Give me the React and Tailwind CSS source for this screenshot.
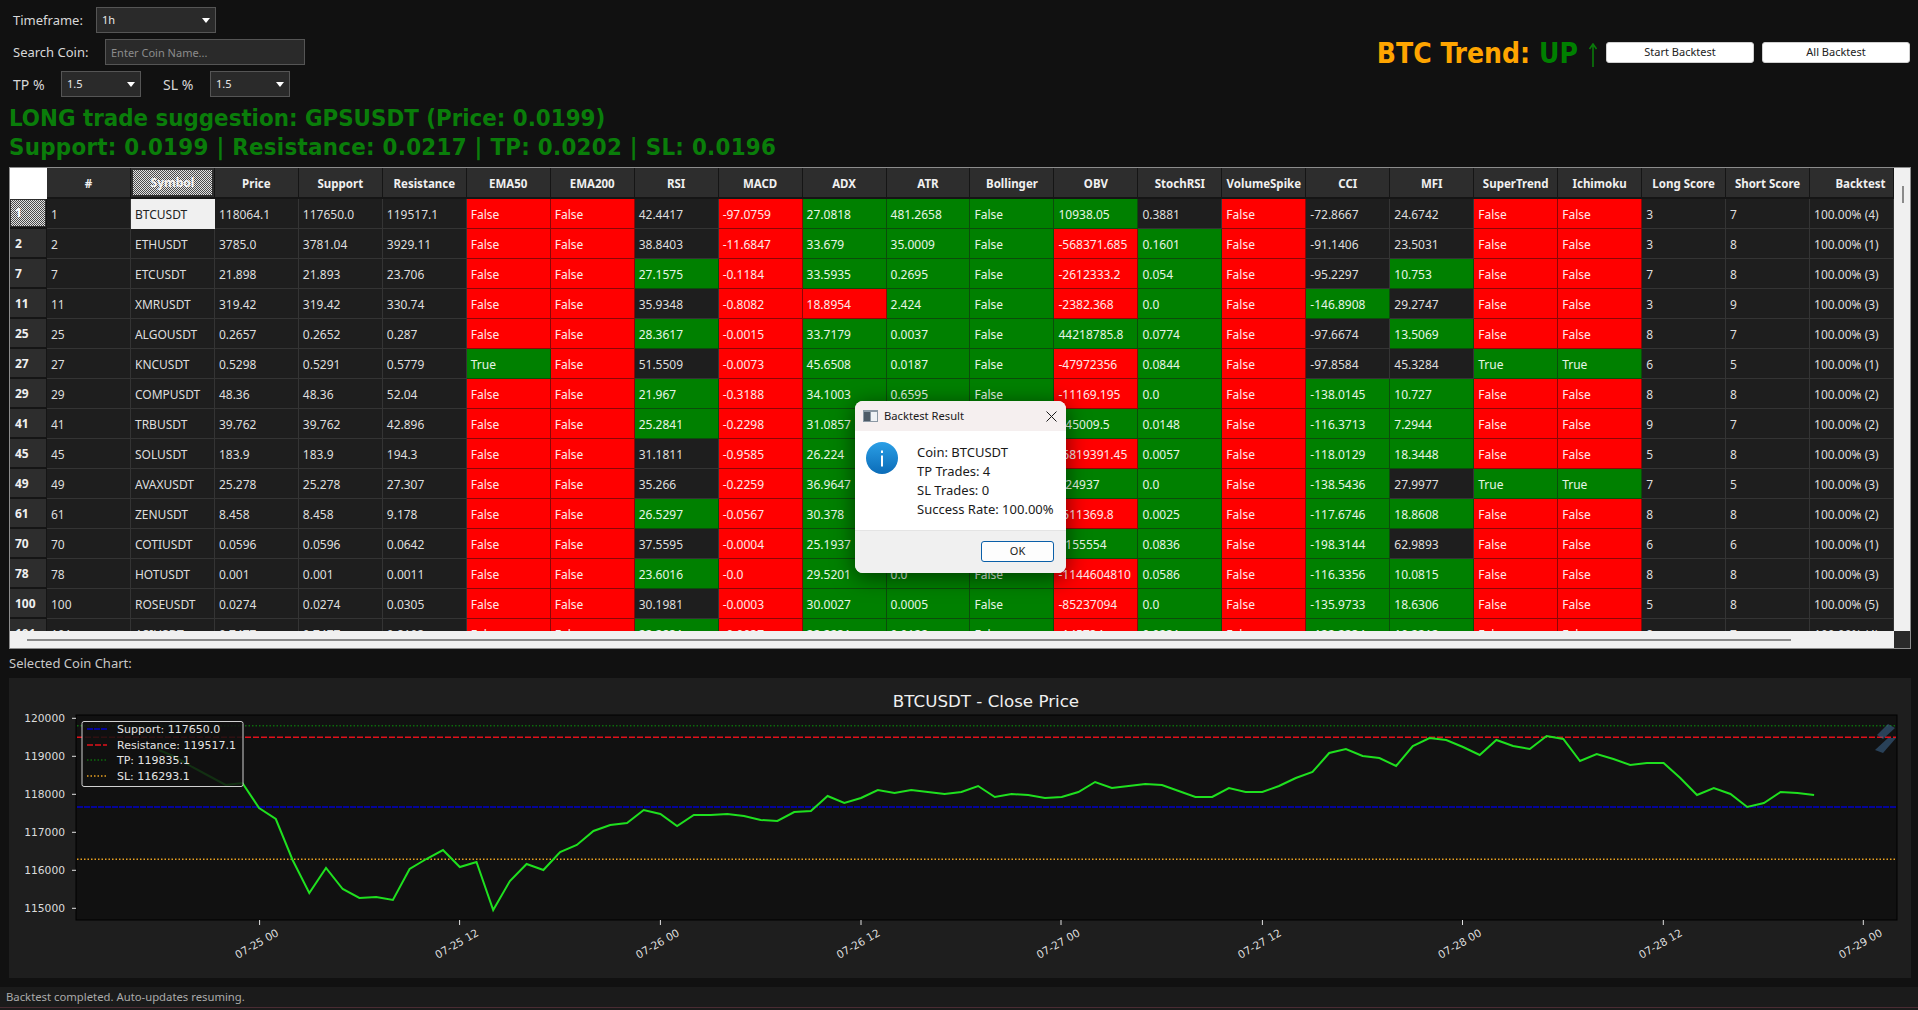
const columns = ["#", "Symbol", "Price", "Support", "Resistance", "EMA50", "EMA200", "RSI", "MACD", "ADX", "ATR", "Bollinger", "OBV", "StochRSI", "VolumeSpike", "CCI", "MFI", "SuperTrend", "Ichimoku", "Long Score", "Short Score", "Backtest"]

// values from # to Backtest, mask = colour of each cell from EMA50 on
const rows = [
  { id: "1", mask: "rrnrggggnrnnrrnnn", values: ["1", "BTCUSDT", "118064.1", "117650.0", "119517.1", "False", "False", "42.4417", "-97.0759", "27.0818", "481.2658", "False", "10938.05", "0.3881", "False", "-72.8667", "24.6742", "False", "False", "3", "7", "100.00% (4)"] },
  { id: "2", mask: "rrnrgggrgrnnrrnnn", values: ["2", "ETHUSDT", "3785.0", "3781.04", "3929.11", "False", "False", "38.8403", "-11.6847", "33.679", "35.0009", "False", "-568371.685", "0.1601", "False", "-91.1406", "23.5031", "False", "False", "3", "8", "100.00% (1)"] },
  { id: "7", mask: "rrgrgggrgrngrrnnn", values: ["7", "ETCUSDT", "21.898", "21.893", "23.706", "False", "False", "27.1575", "-0.1184", "33.5935", "0.2695", "False", "-2612333.2", "0.054", "False", "-95.2297", "10.753", "False", "False", "7", "8", "100.00% (3)"] },
  { id: "11", mask: "rrnrrggrgrgnrrnnn", values: ["11", "XMRUSDT", "319.42", "319.42", "330.74", "False", "False", "35.9348", "-0.8082", "18.8954", "2.424", "False", "-2382.368", "0.0", "False", "-146.8908", "29.2747", "False", "False", "3", "9", "100.00% (3)"] },
  { id: "25", mask: "rrgrgggggrngrrnnn", values: ["25", "ALGOUSDT", "0.2657", "0.2652", "0.287", "False", "False", "28.3617", "-0.0015", "33.7179", "0.0037", "False", "44218785.8", "0.0774", "False", "-97.6674", "13.5069", "False", "False", "8", "7", "100.00% (3)"] },
  { id: "27", mask: "grnrgggrgrnnggnnn", values: ["27", "KNCUSDT", "0.5298", "0.5291", "0.5779", "True", "False", "51.5509", "-0.0073", "45.6508", "0.0187", "False", "-47972356", "0.0844", "False", "-97.8584", "45.3284", "True", "True", "6", "5", "100.00% (1)"] },
  { id: "29", mask: "rrgrgggrgrggrrnnn", values: ["29", "COMPUSDT", "48.36", "48.36", "52.04", "False", "False", "21.967", "-0.3188", "34.1003", "0.6595", "False", "-11169.195", "0.0", "False", "-138.0145", "10.727", "False", "False", "8", "8", "100.00% (2)"] },
  { id: "41", mask: "rrgrgggggrggrrnnn", values: ["41", "TRBUSDT", "39.762", "39.762", "42.896", "False", "False", "25.2841", "-0.2298", "31.0857", "0.8124", "False", "145009.5", "0.0148", "False", "-116.3713", "7.2944", "False", "False", "9", "7", "100.00% (2)"] },
  { id: "45", mask: "rrnrgggrgrggrrnnn", values: ["45", "SOLUSDT", "183.9", "183.9", "194.3", "False", "False", "31.1811", "-0.9585", "26.224", "2.1047", "False", "-6819391.45", "0.0057", "False", "-118.0129", "18.3448", "False", "False", "5", "8", "100.00% (3)"] },
  { id: "49", mask: "rrnrgggggrgnggnnn", values: ["49", "AVAXUSDT", "25.278", "25.278", "27.307", "False", "False", "35.266", "-0.2259", "36.9647", "0.3381", "False", "124937", "0.0", "False", "-138.5436", "27.9977", "True", "True", "7", "5", "100.00% (3)"] },
  { id: "61", mask: "rrgrgggrgrggrrnnn", values: ["61", "ZENUSDT", "8.458", "8.458", "9.178", "False", "False", "26.5297", "-0.0567", "30.378", "0.0972", "False", "-511369.8", "0.0025", "False", "-117.6746", "18.8608", "False", "False", "8", "8", "100.00% (2)"] },
  { id: "70", mask: "rrnrgggggrgnrrnnn", values: ["70", "COTIUSDT", "0.0596", "0.0596", "0.0642", "False", "False", "37.5595", "-0.0004", "25.1937", "0.0006", "False", "3155554", "0.0836", "False", "-198.3144", "62.9893", "False", "False", "6", "6", "100.00% (1)"] },
  { id: "78", mask: "rrgrgggrgrggrrnnn", values: ["78", "HOTUSDT", "0.001", "0.001", "0.0011", "False", "False", "23.6016", "-0.0", "29.5201", "0.0", "False", "-1144604810", "0.0586", "False", "-116.3356", "10.0815", "False", "False", "8", "8", "100.00% (3)"] },
  { id: "100", mask: "rrnrgggrgrggrrnnn", values: ["100", "ROSEUSDT", "0.0274", "0.0274", "0.0305", "False", "False", "30.1981", "-0.0003", "30.0027", "0.0005", "False", "-85237094", "0.0", "False", "-135.9733", "18.6306", "False", "False", "5", "8", "100.00% (5)"] },
  { id: "101", mask: "rrgrgggrgrggrrnnn", values: ["101", "ASIUSDT", "0.7477", "0.7477", "0.8103", "False", "False", "22.2831", "-0.0037", "22.2231", "0.0122", "False", "-145734", "0.0231", "False", "-122.2234", "10.2212", "False", "False", "8", "7", "100.00% (4)"] },
]

const cellColors = {
  n: "bg-[#1e1e1e] text-[#dedede] border-[#343434]",
  r: "bg-[#ff0000] text-[#ffe9e9] border-[#8c0606]",
  g: "bg-[#008000] text-[#e6f6e6] border-[#0b4d0b]",
}

const dither = "[background:repeating-conic-gradient(#4a4a4a_0_25%,#e2e2e2_0_50%)_0_0/2px_2px]"

// close price, screen y of each hourly candle
const closes = [
  750, 757, 767, 776, 785, 783, 808, 819, 860, 893, 868, 889, 898, 897, 900, 869, 859, 850, 867, 862, 910, 881, 864, 870, 852, 845, 831, 825, 823,
  810, 814, 826, 815, 815, 814, 816, 820, 821, 812, 811, 796, 803, 798, 790, 793, 790, 792, 794, 792, 786, 797, 794, 795, 798, 797, 792, 782, 788, 786, 784, 785, 791, 797, 797, 788, 792, 792, 786,
  778, 772, 753, 749, 756, 758, 766, 746, 738, 740, 747, 755, 740, 746, 749, 736, 739, 761, 754, 759, 765, 763, 763, 778, 795, 788, 794, 807, 803, 792, 793, 795,
]

const closeLine = closes.map((y, i) => `${(158.8 + i * 16.72).toFixed(1)},${y}`).join(" ")

const yTicks = [
  { label: "120000", y: 718.3 },
  { label: "119000", y: 756.3 },
  { label: "118000", y: 794.3 },
  { label: "117000", y: 832.3 },
  { label: "116000", y: 870.3 },
  { label: "115000", y: 908.3 },
]

const xTicks = [
  { label: "07-25 00", x: 259.6 },
  { label: "07-25 12", x: 459.6 },
  { label: "07-26 00", x: 660.4 },
  { label: "07-26 12", x: 861 },
  { label: "07-27 00", x: 1061 },
  { label: "07-27 12", x: 1262.4 },
  { label: "07-28 00", x: 1462.5 },
  { label: "07-28 12", x: 1663.3 },
  { label: "07-29 00", x: 1863.3 },
]

const legend = [
  { label: "Support: 117650.0", y: 729, color: "#0000c8", dash: "6 1" },
  { label: "Resistance: 119517.1", y: 745, color: "#e0101a", dash: "6 2" },
  { label: "TP: 119835.1", y: 760, color: "#0c6a0c", dash: "1.5 2" },
  { label: "SL: 116293.1", y: 776, color: "#e8a020", dash: "1.5 2" },
]

const levels = [
  { y: 725.7, color: "#0c6a0c", dash: "1.5 2" },
  { y: 737.3, color: "#e0101a", dash: "6 2" },
  { y: 807, color: "#0000c8", dash: "6 1" },
  { y: 859.3, color: "#e8a020", dash: "1.5 2" },
]

const Combo = ({ value, width }) => (
  <div className={`flex h-[26px] ${width} items-center justify-between border border-[#555] bg-[#2a2a2a] pl-[5px] pr-[5px] text-[11px] text-[#e8e8e8]`}>
    <span>{value}</span>
    <span className="h-0 w-0 border-x-[4px] border-t-[5px] border-x-transparent border-t-white" />
  </div>
)

const Controls = () => (
  <div className="flex flex-col gap-[6px] text-[13px] text-[#d8d8d8]">
    <div className="flex h-[26px] items-center">
      <span className="mt-[2px] w-[83px]">Timeframe:</span>
      <Combo value="1h" width="w-[120px]" />
    </div>
    <div className="flex h-[26px] items-center">
      <span className="mt-[2px] w-[92px]">Search Coin:</span>
      <input
        placeholder="Enter Coin Name..."
        className="h-[26px] w-[200px] border border-[#555] bg-[#2a2a2a] px-[5px] text-[11px] text-white outline-none placeholder:text-[#8c8c8c]"
      />
    </div>
    <div className="flex h-[26px] items-center">
      <span className="w-[48px] text-[14px]">TP %</span>
      <Combo value="1.5" width="w-[80px]" />
      <span className="ml-[22px] w-[47px] text-[14px]">SL %</span>
      <Combo value="1.5" width="w-[80px]" />
    </div>
  </div>
)

const TrendBar = () => (
  <div className="mt-[32px] flex h-[26px] items-center gap-[8px]">
    <div className="flex items-center font-['DejaVu_Sans_Condensed','DejaVu_Sans',sans-serif] text-[28px] font-bold leading-none">
      <span className="mt-[3px] text-[#ffa500]">BTC Trend:</span>
      <span className="ml-[9px] mt-[3px] text-[#008000]">UP</span>
      <svg width="10" height="25" viewBox="0 0 10 25" className="ml-[10px] mt-[6px]" fill="none" stroke="#0a7a0a" strokeWidth="1.6">
        <path d="M5 24V1M1.5 6 5 1l3.500 5" />
      </svg>
    </div>
    <button className="h-[21px] w-[148px] rounded-[3px] border border-[#d0d0d0] bg-white text-[11px] text-[#222]">Start Backtest</button>
    <button className="h-[21px] w-[148px] rounded-[3px] border border-[#d0d0d0] bg-white text-[11px] text-[#222]">All Backtest</button>
  </div>
)

const CoinTable = () => (
  <div className="mx-[9px] mt-[5px] flex w-[1902px] flex-col border border-[#8c8c8c] bg-[#f0f0f0]">
    <div className="flex">
      <div className="h-[463px] w-[1884px] overflow-hidden bg-[#1e1e1e]">
        <div className="grid grid-cols-[37px_repeat(22,minmax(0,1fr))] text-[12px] leading-none">
          <div className="h-[31px] bg-white" />
          {columns.map((name) => {
            if (name === "Symbol") {
              return (
                <div key={name} className="flex h-[31px] items-center justify-center border-r border-b-2 border-[#151515] bg-[#2d2d2d] p-[2px]">
                  <div className={`flex h-full w-full items-center justify-center font-bold text-[#f4f4f4] ${dither}`}>{name}</div>
                </div>
              )
            }
            return (
              <div key={name} className={`flex h-[31px] items-center justify-center whitespace-nowrap border-r border-b-2 border-[#151515] bg-[#2d2d2d] pt-[2px] text-[11.5px] font-bold text-[#f0f0f0] ${name === "Backtest" ? "pl-[18px]" : ""}`}>
                {name}
              </div>
            )
          })}
          {rows.map((row, r) => (
            <RowCells key={row.id} row={row} first={r === 0} />
          ))}
        </div>
      </div>
      <div className="relative h-[463px] flex-1">
        <div className="absolute left-[8px] top-[18px] h-[17px] w-[2px] bg-[#8a8a8a]" />
      </div>
    </div>
    <div className="flex h-[17px]">
      <div className="flex w-[1884px] items-center pl-[17px]">
        <div className="h-[2px] w-[1764px] bg-[#8a8a8a]" />
      </div>
      <div className="flex-1 bg-[#2a2a2a]" />
    </div>
  </div>
)

const RowCells = ({ row, first }) => (
  <>
    {first ? (
      <div className="h-[30px] border-r border-b-2 border-[#151515] bg-[#2d2d2d] p-[1px]">
        <div className={`flex h-full items-center pl-[4px] font-bold text-white ${dither}`}>{row.id}</div>
      </div>
    ) : (
      <div className="flex h-[30px] items-center border-r border-b-2 border-[#151515] bg-[#2d2d2d] pl-[5px] pt-[1px] font-bold text-[#f0f0f0]">{row.id}</div>
    )}
    {row.values.map((value, i) => {
      const color = first && i === 1 ? "bg-[#f0f0f0] text-[#222] border-[#f0f0f0]" : cellColors[i >= 5 ? row.mask[i - 5] : "n"]
      return (
        <div key={i} className={`flex h-[30px] items-center overflow-hidden whitespace-nowrap border-r border-b pl-[4px] pt-[2px] ${color}`}>
          {value}
        </div>
      )
    })}
  </>
)

const PriceChart = () => (
  <div className="mx-[9px] mt-[7px] h-[300px] w-[1902px] bg-[#1e1e1e]">
    <svg viewBox="9 678 1902 300" width="1902" height="300" className="block font-['DejaVu_Sans',sans-serif]">
      <text x="986" y="706.500" textAnchor="middle" fontSize="16.700" fill="#f0f0f0">BTCUSDT - Close Price</text>
      <rect x="76" y="715" width="1821" height="205" fill="#111" stroke="#000" />
      {yTicks.map((t) => (
        <g key={t.label}>
          <line x1="72" x2="76" y1={t.y} y2={t.y} stroke="#e0e0e0" />
          <text x="65" y={t.y + 4} textAnchor="end" fontSize="10.700" fill="#dcdcdc">{t.label}</text>
        </g>
      ))}
      {xTicks.map((t) => (
        <g key={t.label}>
          <line x1={t.x} x2={t.x} y1="920" y2="925" stroke="#e0e0e0" />
          <text transform={`translate(${t.x - 1} 947) rotate(-30)`} textAnchor="middle" fontSize="10.700" fill="#dcdcdc">{t.label}</text>
        </g>
      ))}
      {levels.map((l) => (
        <line key={l.y} x1="77" x2="1896" y1={l.y} y2={l.y} stroke={l.color} strokeWidth="1.500" strokeDasharray={l.dash} />
      ))}
      <polyline points={closeLine} fill="none" stroke="#1fe01f" strokeWidth="2" />
      <polygon points="1877,735 1888,724 1895,728 1883,739" fill="#3a6288" opacity="0.6" />
      <polygon points="1875,750 1888,738 1896,738 1883,753" fill="#3a6288" opacity="0.6" />
      <rect x="82" y="721.500" width="161" height="65" rx="2" fill="#111" fillOpacity="0.85" stroke="#d0d0d0" />
      {legend.map((l) => (
        <g key={l.label}>
          <line x1="87" x2="107" y1={l.y} y2={l.y} stroke={l.color} strokeWidth="1.500" strokeDasharray={l.dash} />
          <text x="117" y={l.y + 4} fontSize="11" fill="#e4e4e4">{l.label}</text>
        </g>
      ))}
    </svg>
  </div>
)

const InfoIcon = () => (
  <svg width="32" height="32" viewBox="0 0 32 32" className="shrink-0">
    <defs>
      <linearGradient id="info" x1="0" y1="0" x2="0" y2="1">
        <stop offset="0" stopColor="#2b9fe6" />
        <stop offset="1" stopColor="#0b6cb8" />
      </linearGradient>
    </defs>
    <circle cx="16" cy="16" r="16" fill="url(#info)" />
    <rect x="15" y="13.500" width="2" height="11" fill="#fff" />
    <rect x="15" y="8.500" width="2" height="2.500" fill="#fff" />
  </svg>
)

const ResultDialog = () => (
  <div className="absolute left-[855px] top-[401px] flex h-[172px] w-[211px] flex-col overflow-hidden rounded-[8px] bg-white text-[#1a1a1a] shadow-[0_4px_22px_rgba(0,0,0,0.55)]">
    <div className="flex h-[30px] items-center bg-[#f5efef] pl-[8px] pr-[9px] text-[11.200px]">
      <svg width="15" height="12" viewBox="0 0 15 12" className="shrink-0">
        <rect width="15" height="12" fill="#8b98a4" />
        <rect x="1" y="2" width="6" height="9" fill="#4d5a66" />
        <rect x="8" y="2" width="6" height="9" fill="#eef2f5" />
      </svg>
      <span className="ml-[6px] flex-1">Backtest Result</span>
      <svg width="11" height="11" viewBox="0 0 11 11" fill="none" stroke="#1a1a1a" strokeWidth="1">
        <path d="M.5.5l10 10M10.500.5l-10 10" />
      </svg>
    </div>
    <div className="flex h-[99px] items-start pl-[11px] pt-[11px]">
      <InfoIcon />
      <div className="ml-[19px] mt-[1px] flex flex-col whitespace-nowrap text-[13px] leading-[19px]">
        <span>Coin: BTCUSDT</span>
        <span>TP Trades: 4</span>
        <span>SL Trades: 0</span>
        <span>Success Rate: 100.00%</span>
      </div>
    </div>
    <div className="flex flex-1 items-center justify-end border-t border-[#e4e4e4] bg-[#f0f0f0] pb-[2px] pr-[12px]">
      <button className="h-[21px] w-[73px] rounded-[3px] border border-[#0a5fa8] bg-[#fdfdfd] text-[11px]">OK</button>
    </div>
  </div>
)

const App = () => {
  return (
    <div className="relative flex h-[1010px] w-[1918px] flex-col overflow-hidden bg-[#111111] font-['Noto_Sans',sans-serif]">
      <div className="flex items-start justify-between pl-[13px] pr-[8px] pt-[7px]">
        <Controls />
        <TrendBar />
      </div>
      <div className="mt-[7px] pl-[9px] font-['DejaVu_Sans_Condensed','DejaVu_Sans',sans-serif] text-[23.800px] font-bold leading-[29px] text-[#0a7d0a]">
        <div>LONG trade suggestion: GPSUSDT (Price: 0.0199)</div>
        <div className="tracking-[0.28px]">Support: 0.0199 | Resistance: 0.0217 | TP: 0.0202 | SL: 0.0196</div>
      </div>
      <CoinTable />
      <div className="mt-[6px] h-[16px] pl-[9px] text-[13px] leading-[17px] text-[#c8c8c8]">Selected Coin Chart:</div>
      <PriceChart />
      <div className="mt-[9px] flex h-[20px] items-center bg-[#1b1b1b] pl-[6px] text-[11.300px] text-[#aaaaaa]">Backtest completed. Auto-updates resuming.</div>
      <div className="h-[1px] bg-[#4a2c33]" />
      <div className="flex-1 bg-[#1b1b1b]" />
      <ResultDialog />
    </div>
  )
}

export default App
